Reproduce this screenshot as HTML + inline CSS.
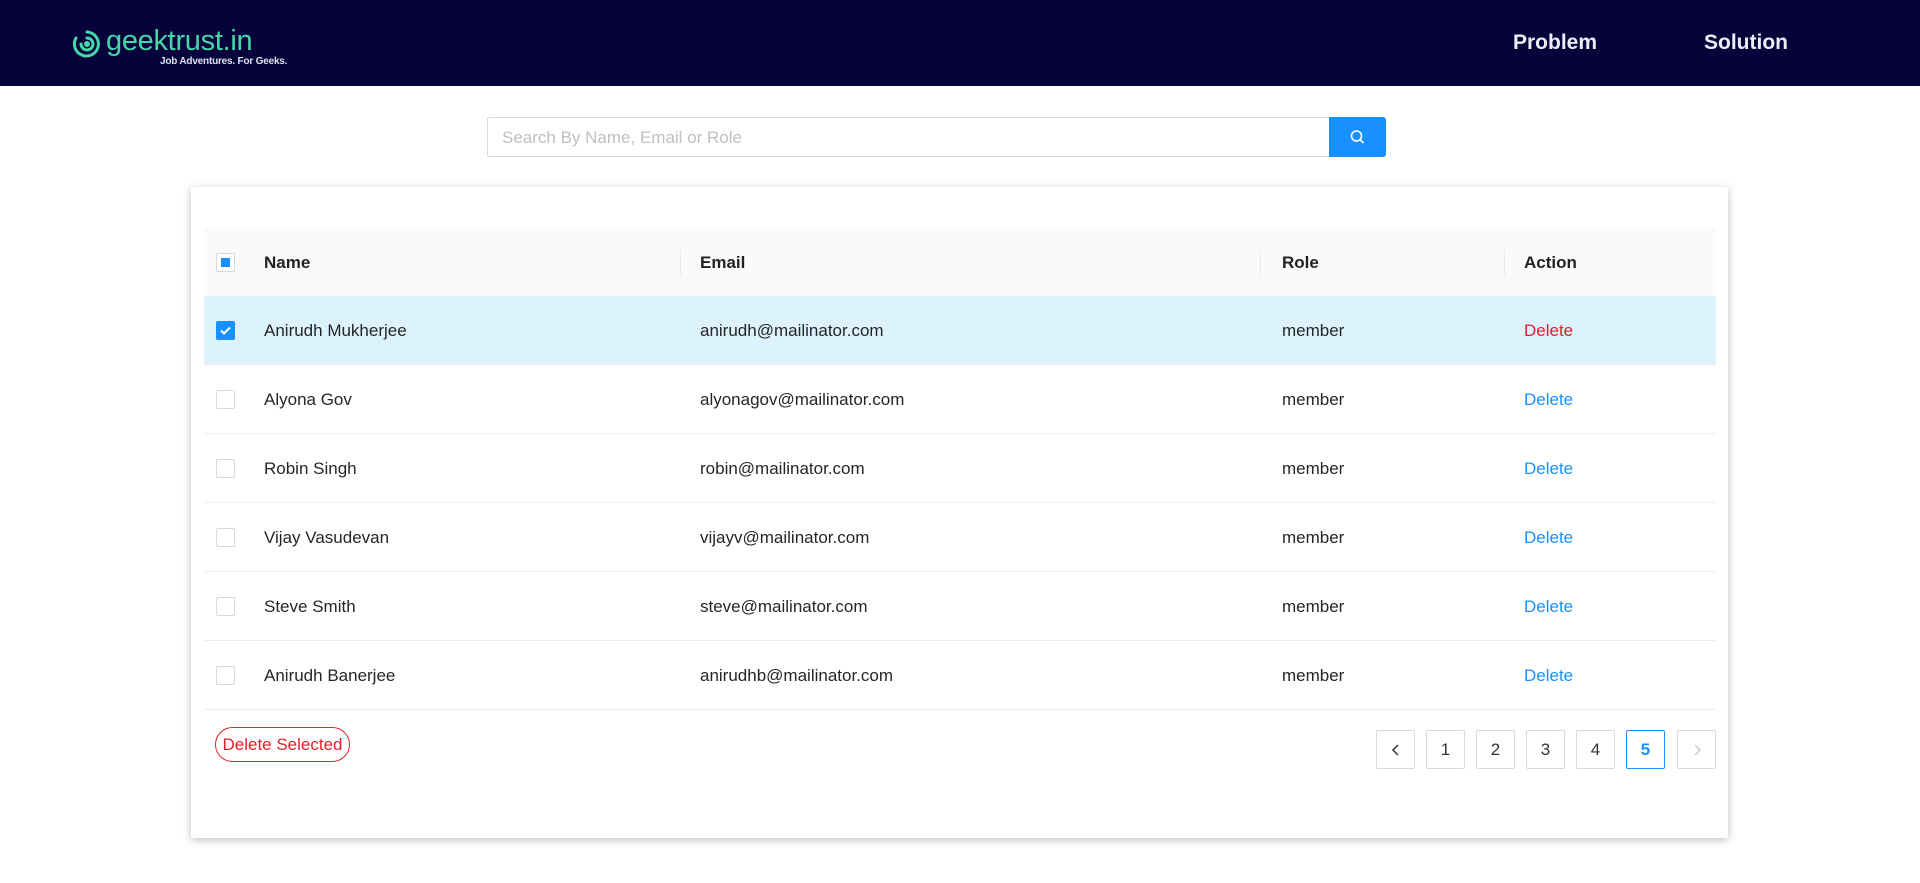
<!DOCTYPE html>
<html><head><meta charset="utf-8"><style>
*{box-sizing:border-box;margin:0;padding:0}
body{width:1920px;height:883px;background:#fff;font-family:"Liberation Sans",sans-serif;color:#262626;position:relative;overflow:hidden}
.hdr{position:absolute;left:0;top:0;width:1920px;height:86px;background:#07033a}
.logo{position:absolute;left:70px;top:26px;color:#45d6a9}
.logo .t{position:absolute;left:36px;top:-1px;font-size:29px;letter-spacing:-0.3px;white-space:nowrap}
.logo .s{position:absolute;left:90px;top:30px;font-size:10px;font-weight:bold;letter-spacing:-0.2px;color:#e0e0ee;white-space:nowrap}
.nav{position:absolute;top:31px;font-size:21px;font-weight:bold;color:#ededf5}
.search{position:absolute;left:487px;top:117px;width:843px;height:40px;border:1px solid #d9d9d9;border-radius:2px 0 0 2px;font-size:17px;color:#bfbfbf;padding:10px 14px}
.sbtn{position:absolute;left:1329px;top:117px;width:57px;height:40px;background:#1890ff;border-radius:0 3px 3px 0}
.card{position:absolute;left:191px;top:187px;width:1537px;height:651px;background:#fff;box-shadow:0 2px 8px rgba(0,0,0,.25)}
.row{position:absolute;left:204px;width:1512px;height:69px;border-bottom:1px solid #ececec;font-size:17px}
.row span{position:absolute;top:25px;white-space:nowrap}
.hd{background:#fafafa;font-weight:bold;color:#222}
.sel{background:#dcf2fd}
.cb{position:absolute;left:12px;top:25px;width:19px;height:19px;border:1px solid #d9d9d9;border-radius:2px;background:#fff}
.sep{position:absolute;top:22px;width:1px;height:25px;background:#ebebeb}
.del{color:#1890ff}
.pg{position:absolute;top:730px;width:39px;height:39px;border:1px solid #d9d9d9;border-radius:2px;font-size:17px;text-align:center;line-height:37px;color:#333}
.pg svg{position:absolute;left:13px;top:12px}
</style></head><body>
<div class="hdr">
 <div class="logo">
  <svg width="30" height="30" viewBox="0 0 30 30" style="position:absolute;left:2px;top:3px" fill="none" stroke="#45d6a9" stroke-width="3" stroke-linecap="round"><path d="M15 3A12 12 0 1 1 4 9"/><path d="M15 9a6 6 0 1 1-6 6"/><circle cx="15" cy="15" r="1.5" fill="#45d6a9"/></svg>
  <div class="t">geektrust.in</div>
  <div class="s">Job Adventures. For Geeks.</div>
 </div>
 <div class="nav" style="left:1513px">Problem</div>
 <div class="nav" style="left:1704px">Solution</div>
</div>
<div class="search">Search By Name, Email or Role</div>
<div class="sbtn"><svg width="57" height="40" viewBox="0 0 57 40" fill="none" stroke="#fff" stroke-width="1.6"><circle cx="27.5" cy="19" r="5"/><path d="M31 22.5l3.5 3.5"/></svg></div>
<div class="card"></div>
<div class="row hd" style="top:228px;height:68px;border-bottom:none">
 <div class="cb"><div style="position:absolute;left:4px;top:4px;width:9px;height:9px;background:#1890ff"></div></div>
 <span style="left:60px">Name</span><div class="sep" style="left:476px"></div>
 <span style="left:496px">Email</span><div class="sep" style="left:1056px"></div>
 <span style="left:1078px">Role</span><div class="sep" style="left:1300px"></div>
 <span style="left:1320px">Action</span>
</div>
<div class="row sel" style="top:296px">
 <div class="cb" style="background:#1890ff;border-color:#1890ff"><svg width="17" height="17" viewBox="0 0 17 17" fill="none" stroke="#fff" stroke-width="2"><path d="M4 8.5l3 3 6-6"/></svg></div>
 <span style="left:60px">Anirudh Mukherjee</span><span style="left:496px">anirudh@mailinator.com</span><span style="left:1078px">member</span><span style="left:1320px;color:#e0202a">Delete</span>
</div>
<div class="row" style="top:365px"><div class="cb"></div><span style="left:60px">Alyona Gov</span><span style="left:496px">alyonagov@mailinator.com</span><span style="left:1078px">member</span><span class="del" style="left:1320px">Delete</span></div>
<div class="row" style="top:434px"><div class="cb"></div><span style="left:60px">Robin Singh</span><span style="left:496px">robin@mailinator.com</span><span style="left:1078px">member</span><span class="del" style="left:1320px">Delete</span></div>
<div class="row" style="top:503px"><div class="cb"></div><span style="left:60px">Vijay Vasudevan</span><span style="left:496px">vijayv@mailinator.com</span><span style="left:1078px">member</span><span class="del" style="left:1320px">Delete</span></div>
<div class="row" style="top:572px"><div class="cb"></div><span style="left:60px">Steve Smith</span><span style="left:496px">steve@mailinator.com</span><span style="left:1078px">member</span><span class="del" style="left:1320px">Delete</span></div>
<div class="row" style="top:641px"><div class="cb"></div><span style="left:60px">Anirudh Banerjee</span><span style="left:496px">anirudhb@mailinator.com</span><span style="left:1078px">member</span><span class="del" style="left:1320px">Delete</span></div>
<div style="position:absolute;left:215px;top:727px;width:135px;height:35px;border:1px solid #e0202a;border-radius:18px;color:#e0202a;font-size:17px;text-align:center;line-height:33px">Delete Selected</div>
<div class="pg" style="left:1376px"><svg width="12" height="14" viewBox="0 0 12 14" fill="none" stroke="#333" stroke-width="1.5"><path d="M8 2L3 7l5 5"/></svg></div>
<div class="pg" style="left:1426px">1</div>
<div class="pg" style="left:1476px">2</div>
<div class="pg" style="left:1526px">3</div>
<div class="pg" style="left:1576px">4</div>
<div class="pg" style="left:1626px;border-color:#1890ff;color:#1890ff;font-weight:bold">5</div>
<div class="pg" style="left:1677px"><svg width="12" height="14" viewBox="0 0 12 14" fill="none" stroke="#ccc" stroke-width="1.5"><path d="M4 2l5 5-5 5"/></svg></div>
</body></html>
